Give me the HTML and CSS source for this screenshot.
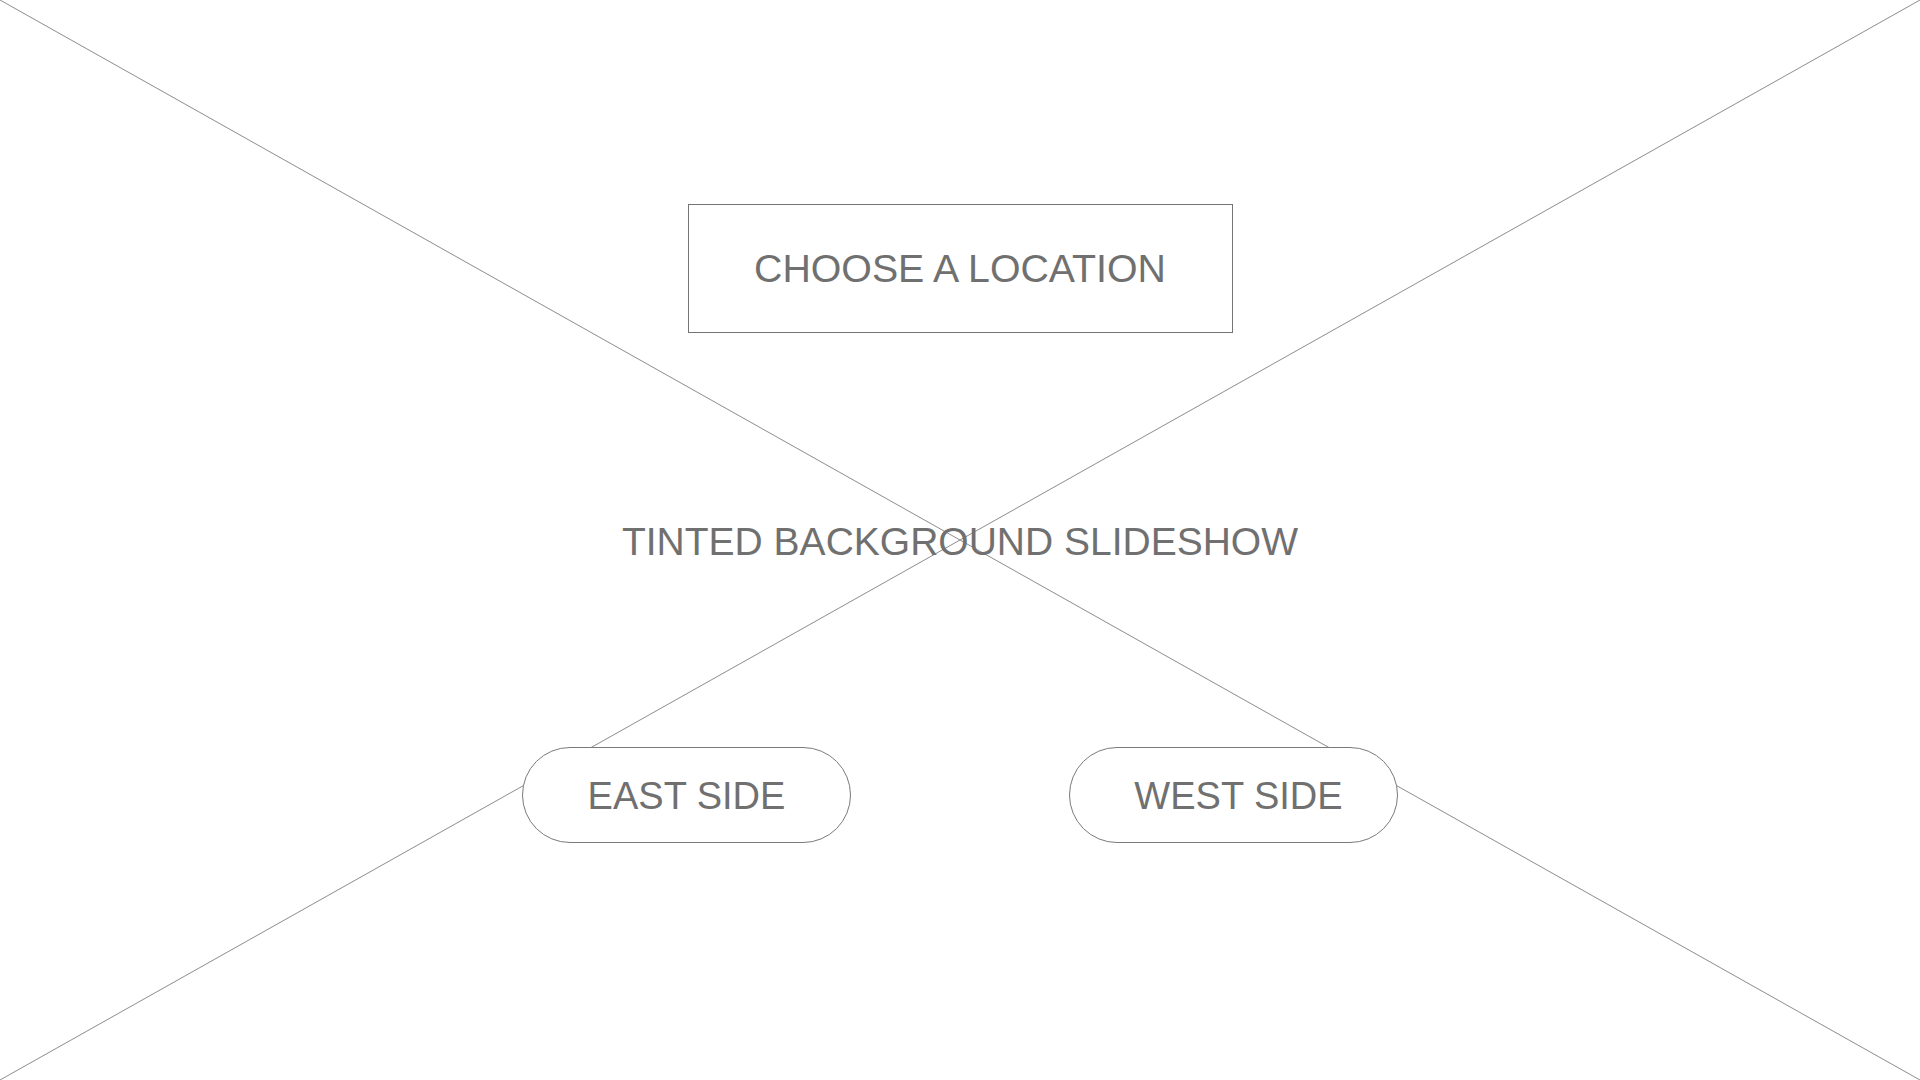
FILE: index.html
```html
<!DOCTYPE html>
<html lang="en">
<head>
    <meta charset="UTF-8">
    <meta name="viewport" content="width=device-width, initial-scale=1.0">
    <title>Tinted Background Slideshow</title>
    <link rel="stylesheet" href="styles.css">
</head>
<body>
    <div class="slideshow">
        <!-- placeholder cross for the background image -->
        <svg class="placeholder-x" viewBox="0 0 1920 1080" preserveAspectRatio="none">
            <line x1="0" y1="0" x2="1920" y2="1080" />
            <line x1="1920" y1="0" x2="0" y2="1080" />
        </svg>
        <div class="content">
            <div class="location-box">CHOOSE A LOCATION</div>
            <div class="slideshow-title">TINTED BACKGROUND SLIDESHOW</div>
            <div class="button-row">
                <button type="button" class="side-button">EAST SIDE</button>
                <button type="button" class="side-button west">WEST SIDE</button>
            </div>
        </div>
    </div>
</body>
</html>
```

FILE: styles.css
```css
html, body {
    margin: 0;
    padding: 0;
    background: #fff;
}
body {
    font-family: "Liberation Sans", Arial, Helvetica, sans-serif;
    color: #707070;
}
.slideshow {
    position: relative;
    width: 1920px;
    height: 1080px;
    overflow: hidden;
}
.placeholder-x {
    position: absolute;
    top: 0;
    left: 0;
    width: 100%;
    height: 100%;
}
.placeholder-x line {
    stroke: #8c8c8c;
    stroke-width: 1;
}
.content {
    position: relative;
    display: flex;
    flex-direction: column;
    align-items: center;
    padding-top: 204px;
}
.location-box {
    display: flex;
    align-items: center;
    justify-content: center;
    box-sizing: border-box;
    width: 545px;
    height: 129px;
    border: 1px solid #747474;
    background: #fff;
    font-size: 39.3px;
}
.slideshow-title {
    margin-top: 185px;
    font-size: 39px;
    line-height: 47px;
}
.button-row {
    display: flex;
    gap: 218px;
    margin-top: 182px;
}
.side-button {
    display: flex;
    align-items: center;
    justify-content: center;
    box-sizing: border-box;
    width: 329px;
    height: 96px;
    padding: 3px 0 0;
    border: 1px solid #7a7a7a;
    border-radius: 48px;
    background: #fff;
    color: #707070;
    font-family: inherit;
    font-size: 38px;
}
.side-button.west {
    padding-left: 10px;
}
```
